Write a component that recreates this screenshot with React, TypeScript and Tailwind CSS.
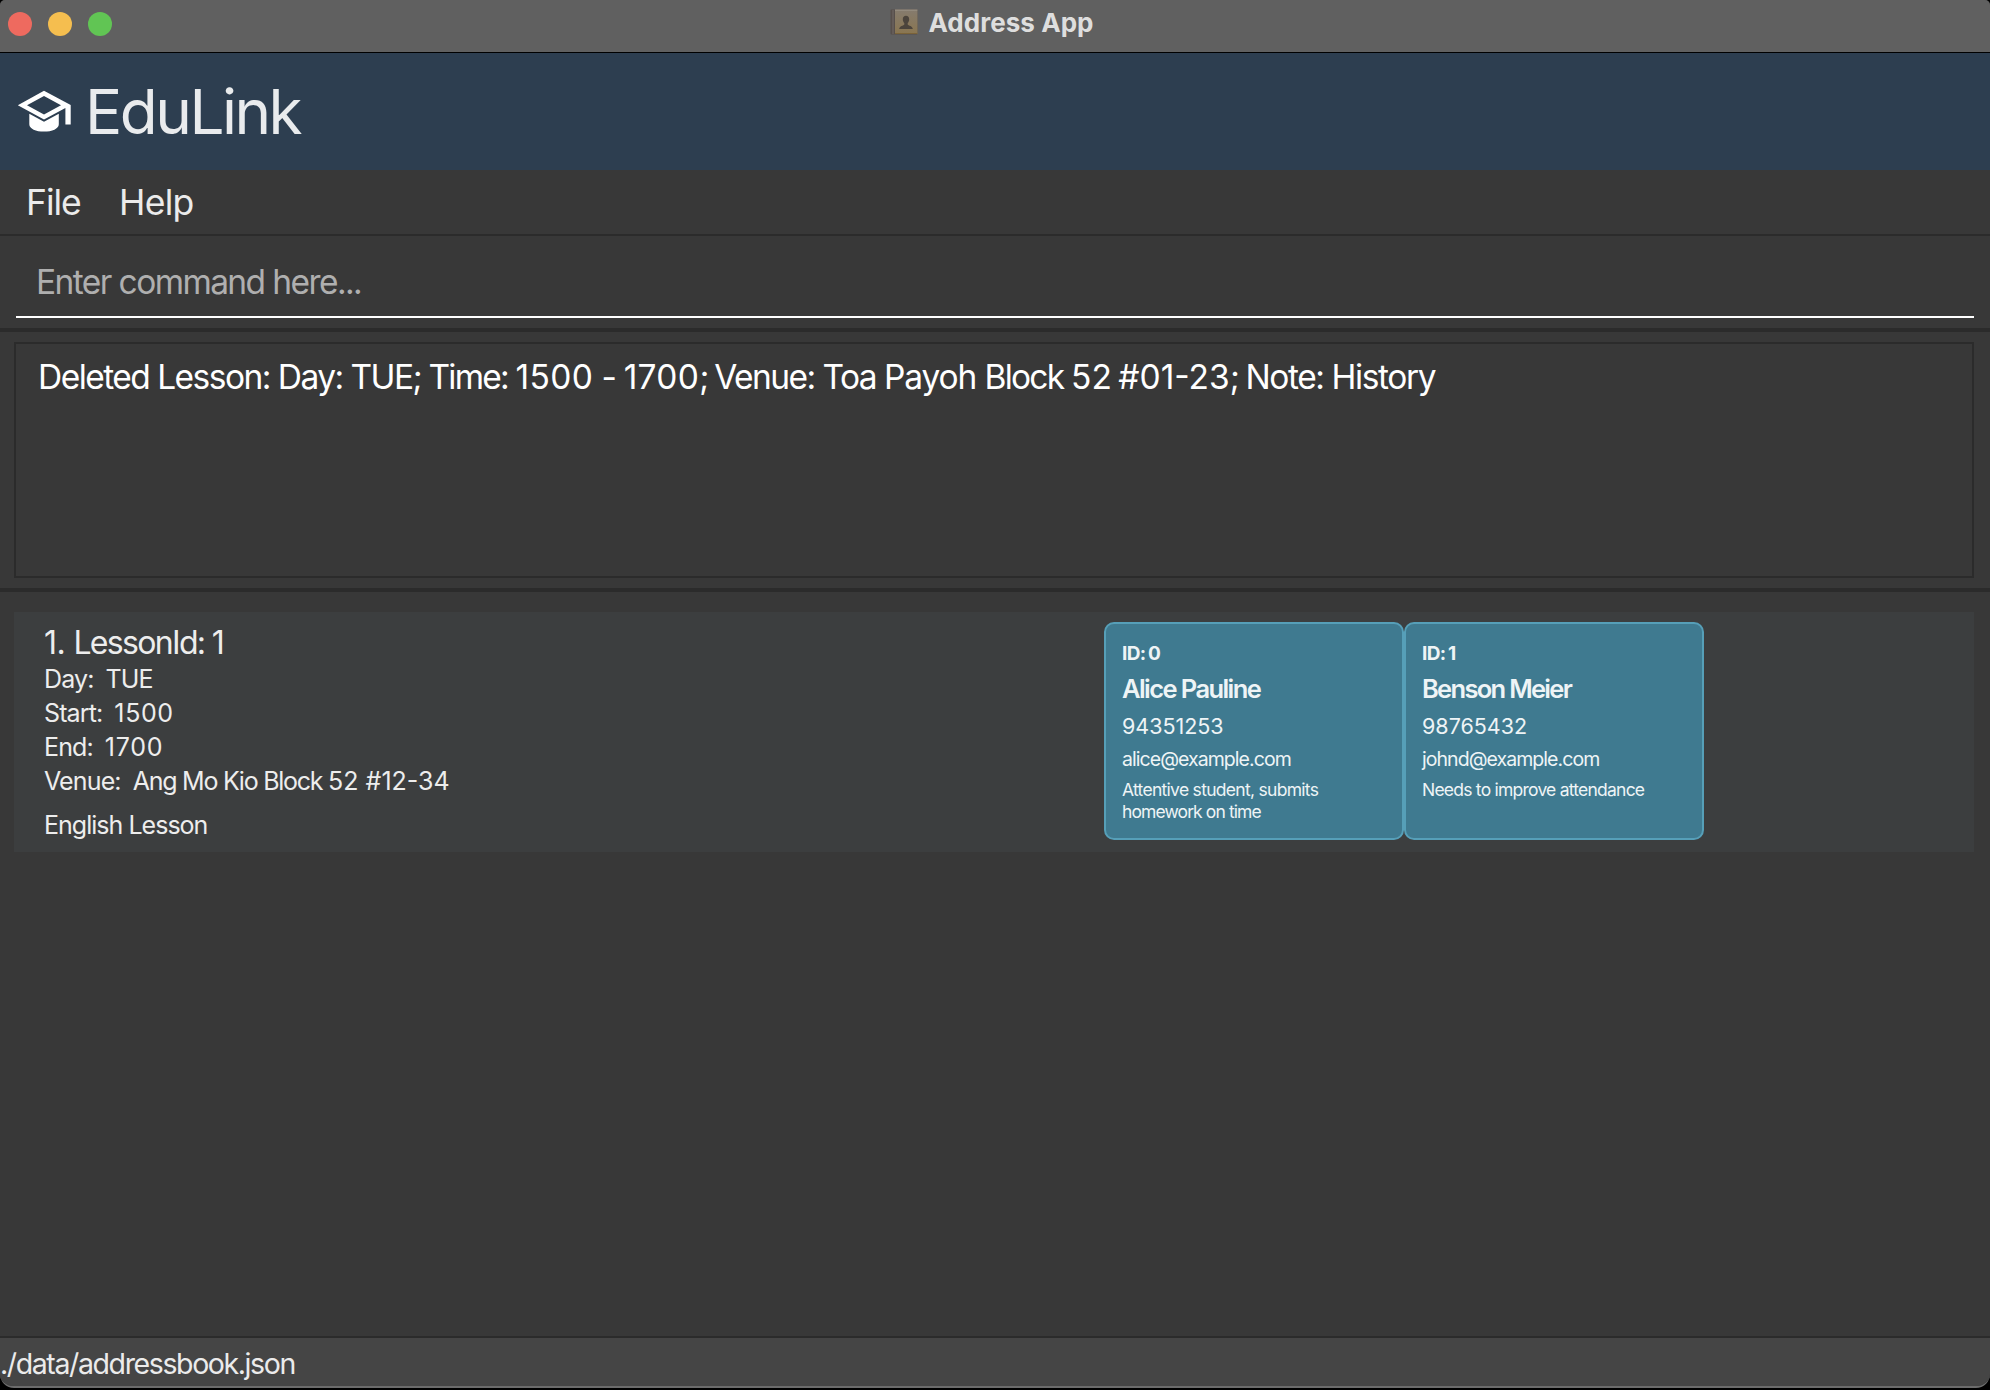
import React from "react";

type Student = {
  id: string;
  name: string;
  phone: string;
  email: string;
  notes: { text: string; tracking: string }[];
  nameTracking: string;
  phoneTracking: string;
};

const students: Student[] = [
  {
    id: "0",
    name: "Alice Pauline",
    phone: "94351253",
    email: "alice@example.com",
    notes: [
      { text: "Attentive student, submits", tracking: "tracking-[-0.71px]" },
      { text: "homework on time", tracking: "tracking-[-0.9px]" },
    ],
    nameTracking: "tracking-[-1.58px]",
    phoneTracking: "tracking-[-0.03px]",
  },
  {
    id: "1",
    name: "Benson Meier",
    phone: "98765432",
    email: "johnd@example.com",
    notes: [{ text: "Needs to improve attendance", tracking: "tracking-[-0.77px]" }],
    nameTracking: "tracking-[-1.7px]",
    phoneTracking: "tracking-[0px]",
  },
];

function GraduationCap() {
  return (
    <svg className="ml-[17px] h-[43px] w-[55px] shrink-0" viewBox="17 90 55 43" fill="#fff">
      <path
        fillRule="evenodd"
        d="M44 90.7 70.7 105V124.6H65.4V108L44 119.6 17.8 105.2ZM44 96 27 105.2 44 114.4 61 105.2Z"
      />
      <path d="M29.3 113.8 44 121.8 58.8 113.8V124.2C58.8 128.8 52 131.6 44 131.6S29.3 128.8 29.3 124.2Z" />
    </svg>
  );
}

function BookIcon() {
  return (
    <svg className="mt-[9px] h-[26px] w-[28px] shrink-0" viewBox="0 0 28 26">
      <defs>
        <linearGradient id="cover" x1="0" y1="0" x2="0" y2="1">
          <stop offset="0" stopColor="#857b6e" />
          <stop offset="1" stopColor="#8a7650" />
        </linearGradient>
      </defs>
      <rect x="0.5" y="0.5" width="27" height="25" rx="1" fill="#574f4b" />
      <rect x="2" y="1" width="2" height="24" fill="#645c58" />
      <rect x="5" y="0.5" width="22.5" height="24.5" fill="url(#cover)" />
      <path d="M5 1.2H27.3" stroke="#9a9184" strokeWidth="1" />
      <path d="M5 24.5H27.3" stroke="#7b6338" strokeWidth="1" />
      <path
        d="M16 6.8C18 6.8 19.2 8.2 19.2 10.3 19.2 12 18.4 13.4 17.7 14.1V15.4C18.4 16.6 22.6 16.8 22.8 20H9.2C9.4 16.8 13.6 16.6 14.3 15.4V14.1C13.6 13.4 12.8 12 12.8 10.3 12.8 8.2 14 6.8 16 6.8Z"
        fill="#4b443c"
      />
    </svg>
  );
}

function TitleBar() {
  return (
    <div className="relative flex h-[53px] shrink-0 justify-center gap-[10px] border-b border-black bg-[#606060]">
      <div className="absolute top-3 left-2 flex gap-4">
        <span className="size-6 rounded-full bg-[#ee6a5f]" />
        <span className="size-6 rounded-full bg-[#f5be4f]" />
        <span className="size-6 rounded-full bg-[#61c554]" />
      </div>
      <BookIcon />
      <span className="mr-[6px] text-[26px] leading-[45px] font-bold tracking-[0.05px] text-[#dedede]">
        Address App
      </span>
    </div>
  );
}

function StudentCard({ s }: { s: Student }) {
  return (
    <div className="h-[218px] w-[300px] rounded-[10px] border-2 border-[#569fb8] bg-[#3f7a90] pt-[14px] pl-4 whitespace-nowrap text-[#eef4f6]">
      <div className="-mb-px text-[19px] leading-[31px] font-bold tracking-[-0.6px] [word-spacing:-1.5px]">
        ID: {s.id}
      </div>
      <div className={"text-[25.5px] leading-[41px] font-semibold " + s.nameTracking}>{s.name}</div>
      <div className={"text-[21.5px] leading-[34px] " + s.phoneTracking}>{s.phone}</div>
      <div className="text-[19.5px] leading-8 tracking-[-0.95px]">{s.email}</div>
      <div className="mt-[3.5px] text-[17.5px] leading-[22px]">
        {s.notes.map((n) => (
          <div key={n.text} className={n.tracking}>
            {n.text}
          </div>
        ))}
      </div>
    </div>
  );
}

function Field({ label, children }: { label: string; children: React.ReactNode }) {
  return (
    <div className="flex h-[34px] gap-[12px] leading-[34px]">
      <span className="tracking-[-0.87px]">{label}</span>
      <span>{children}</span>
    </div>
  );
}

function ResultMessage() {
  return (
    <>
      <span className="tracking-[-1.53px]">Deleted Lesson: Day: TUE</span>
      <span className="tracking-[-1.8px]">; Time: </span>
      <span className="tracking-[0.4px]">1500</span>
      <span className="tracking-[-1.3px]"> - </span>
      <span className="tracking-[0.3px]">1700</span>
      <span className="tracking-[-2.3px]">; </span>
      <span className="tracking-[-1.55px]">Venue: Toa </span>
      <span className="tracking-[-1.1px]">Payoh </span>
      <span className="tracking-[-1.75px]">Block </span>
      <span>52</span>
      <span className="tracking-[-3px]"> </span>
      <span>#01-23</span>
      <span className="tracking-[-1.9px]">; </span>
      <span className="tracking-[-1.4px]">Note: History</span>
    </>
  );
}

export default function App() {
  return (
    <div className="h-[1390px] w-[1990px] bg-black font-[Inter,sans-serif]">
      <div className="flex h-[1388px] flex-col overflow-hidden rounded-t-[5px] rounded-b-[14px] border-b-2 border-[#6c6c6c] bg-[#383838]">
        <TitleBar />
        <header className="flex h-[117px] shrink-0 items-center bg-[#2d3e50]">
          <GraduationCap />
          <h1 className="ml-[13px] text-[62px] leading-[117px] tracking-[-2.5px] text-[#e9ebed]">EduLink</h1>
        </header>
        <nav className="flex h-[66px] shrink-0 border-b-2 border-[#2b2b2b] pl-[26px] text-[35.5px] leading-[65px] text-[#ebebeb]">
          <span className="w-[93px] tracking-[-1.05px]">File</span>
          <span className="tracking-[-0.7px]">Help</span>
        </nav>
        <div className="shrink-0 border-b-4 border-[#2b2b2b] pr-4 pb-[10px] pl-4">
          <div className="h-[82px] border-b-2 border-white pt-[11px] pl-5 text-[33.5px] leading-[70px] tracking-[-1.59px] text-[#afafaf]">
            Enter command here...
          </div>
        </div>
        <div className="shrink-0 border-b-4 border-[#2b2b2b] py-[10px] pr-4 pl-[14px]">
          <div className="h-[236px] border-2 border-[#2b2b2b] pt-[10px] pl-[22px] text-[33.5px] leading-[46px] whitespace-pre text-white">
            <ResultMessage />
          </div>
        </div>
        <main className="flex-1 pt-5 pr-4 pl-[14px]">
          <div className="flex h-[240px] bg-[#3c3e3f]">
            <div className="w-[1090px] pt-[11px] pl-[30px] text-[25px] whitespace-pre text-[#ededed]">
              <div className="text-[32px] leading-[39px] tracking-[-1.68px]">
                <span className="tracking-[-0.6px]">1. </span>LessonId: 1
              </div>
              <Field label="Day:">
                <span className="tracking-[-0.87px]">TUE</span>
              </Field>
              <Field label="Start:">
                <span className="tracking-[0.62px]">1500</span>
              </Field>
              <Field label="End:">
                <span className="tracking-[0.77px]">1700</span>
              </Field>
              <Field label="Venue:">
                <span className="tracking-[-1.25px]">Ang Mo Kio Block </span>
                <span className="tracking-[0px]">52 #12-34</span>
              </Field>
              <div className="mt-[10px] leading-[34px] tracking-[-0.98px]">English Lesson</div>
            </div>
            <div className="flex pt-[10px]">
              {students.map((s) => (
                <StudentCard key={s.id} s={s} />
              ))}
            </div>
          </div>
        </main>
        <footer className="h-[50px] shrink-0 border-t-2 border-[#2b2b2b] bg-[#454545] pt-[2px] text-[28.5px] leading-[47px] tracking-[-1.39px] text-[#ebebeb]">
          ./data/addressbook.json
        </footer>
      </div>
    </div>
  );
}
